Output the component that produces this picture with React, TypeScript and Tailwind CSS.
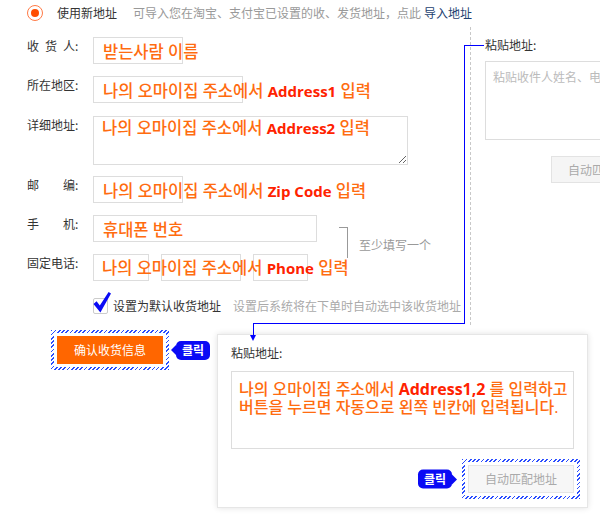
import type { ReactNode } from 'react'

// Korean annotation text: Latin parts in Open Sans, Hangul falls back to Noto KR
const KR = "font-['Open_Sans','Noto_Sans_CJK_KR',sans-serif]"
const BLUE = 'bg-[#0a0af5]'

function Hatch({ children, className = '' }: { children: ReactNode; className?: string }) {
  return (
    <div
      className={`relative p-[3px] bg-[repeating-linear-gradient(135deg,#2a4dff_0_1.2px,transparent_1.2px_3px)] ${className}`}
    >
      <div className="bg-white p-[3px]">{children}</div>
    </div>
  )
}

function Bubble({ side }: { side: 'left' | 'right' }) {
  return (
    <div className="flex items-center">
      {side === 'left' && (
        <span className="w-0 h-0 border-y-[5px] border-y-transparent border-r-[5px] border-r-[#0a0af5]" />
      )}
      <span
        className={`${BLUE} ${KR} rounded-[5px] w-[34px] h-[19px] leading-[19px] text-center text-white text-[12px] font-bold`}
      >
        클릭
      </span>
      {side === 'right' && (
        <span className="w-0 h-0 border-y-[5px] border-y-transparent border-l-[5px] border-l-[#0a0af5]" />
      )}
    </div>
  )
}

function Hint({ ko, en, tail = ' 입력', lead = 'leading-[27px]' }: { ko: string; en?: string; tail?: string; lead?: string }) {
  return (
    <span
      className={`absolute left-[9px] top-0 ${lead} whitespace-nowrap text-[16.5px] font-medium text-[#ff6c10] ${KR}`}
    >
      {ko}
      {en && <b className="font-bold text-[15px] text-[#ff2200]">{en}</b>}
      {en && tail}
    </span>
  )
}

function Row({ label, children, className = '' }: { label: ReactNode; children: ReactNode; className?: string }) {
  return (
    <div className={`flex items-start ${className}`}>
      <div className="w-[66px] shrink-0 leading-[18px]">{label}</div>
      {children}
    </div>
  )
}

const box = 'relative h-[27px] border border-[#ddd] shrink-0'

export default function App() {
  return (
    <div className="relative w-[600px] h-[517px] overflow-hidden bg-white text-[12px] text-[#333] font-['Noto_Sans_CJK_SC',sans-serif]">
      {/* top line */}
      <div className="flex items-center h-[25px] w-[472px] overflow-hidden whitespace-nowrap pl-[27px]">
        <span className="flex items-center justify-center w-4 h-4 rounded-full border border-[#ff7a45] shrink-0">
          <span className="w-2 h-2 rounded-full bg-[#ff4d00]" />
        </span>
        <span className="ml-[14px]">使用新地址</span>
        <span className="ml-[16px] text-[#999]">可导入您在淘宝、支付宝已设置的收、发货地址，点此</span>
        <span className="ml-[3px] text-[#1d4170]">导入地址</span>
      </div>

      <div className="flex mt-[2px]">
        {/* form */}
        <div className="w-[470px] shrink-0 pl-[27px] pt-[10px]">
          <Row
            label={
              <>
                <span className="tracking-[6px]">收货</span>人:
              </>
            }
          >
            <div className={`${box} w-[90px]`}>
              <Hint ko="받는사람 이름" />
            </div>
          </Row>
          <Row label="所在地区:" className="mt-[12px]">
            <div className={`${box} w-[150px]`}>
              <Hint ko="나의 오마이집 주소에서 " en="Address1" />
            </div>
          </Row>
          <Row label="详细地址:" className="mt-[13px]">
            <div className="relative shrink-0">
              <textarea readOnly className="block w-[315px] h-[49px] border border-[#ddd] outline-none" />
              <Hint ko="나의 오마이집 주소에서 " en="Address2" lead="leading-[24px]" />
            </div>
          </Row>
          <Row label="邮　　编:" className="mt-[11px]">
            <div className={`${box} w-[90px]`}>
              <Hint ko="나의 오마이집 주소에서 " en="Zip Code" />
            </div>
          </Row>

          <div className="flex items-start mt-[12px]">
            <div className="w-[289px] shrink-0">
              <Row label="手　　机:">
                <div className={`${box} w-[224px]`}>
                  <Hint ko="휴대폰 번호" />
                </div>
              </Row>
              <Row label="固定电话:" className="mt-[12px]">
                <div className="relative flex gap-[12px]">
                  <div className={`${box} w-[56px]`} />
                  <div className={`${box} w-[80px]`} />
                  <div className={`${box} w-[55px]`} />
                  <Hint ko="나의 오마이집 주소에서 " en="Phone" />
                </div>
              </Row>
            </div>
            <div className="flex items-start mt-[12px] ml-[23px]">
              <div className="w-[9px] h-[31px] border-t border-r border-[#999]" />
              <span className="ml-[11px] mt-[9px] leading-[18px] text-[#999] whitespace-nowrap">至少填写一个</span>
            </div>
          </div>

          <div className="flex items-center h-[18px] mt-[16px] pl-[66px] whitespace-nowrap">
            <span className="relative w-[15px] h-[16px] border border-[#ccc] rounded-[2px] shrink-0">
              <svg className="absolute -left-[1px] -top-[8px]" width="19" height="23" viewBox="0 0 19 23">
                <path d="M0.5 13 L3.6 10.2 L6.8 14.6 L15.6 1 L18 2.6 L7.4 21.5 Z" fill="#0a0af5" />
              </svg>
            </span>
            <span className="ml-[5px]">设置为默认收货地址</span>
            <span className="ml-[12px] text-[#aaa]">设置后系统将在下单时自动选中该收货地址</span>
          </div>

          <div className="flex items-center mt-[15px] ml-[24px]">
            <Hatch>
              <button className="block w-[106px] h-[28px] bg-[#ff6600] text-white text-[12px]">确认收货信息</button>
            </Hatch>
            <div className="ml-[2px]">
              <Bubble side="left" />
            </div>
          </div>
        </div>

        {/* paste panel */}
        <div className="self-start h-[298px] flex-1 border-l border-dashed border-[#c8c8c8] pl-[14px] pt-[9px]">
          <div className="leading-[18px] whitespace-nowrap">粘贴地址:</div>
          <div className="mt-[7px] w-[172px] h-[79px] border border-[#ddd] px-[7px] pt-[6px] leading-[18px] text-[#bbb] whitespace-nowrap overflow-hidden">
            粘贴收件人姓名、电话、地址
          </div>
          <button className="block mt-[16px] ml-[66px] w-[106px] h-[27px] bg-[#f5f5f5] border border-[#e3e3e3] text-[#aaa] text-[12px]">
            自动匹配地址
          </button>
        </div>
      </div>

      {/* enlarged paste panel callout */}
      <div className="absolute left-[217px] top-[334px] w-[371px] h-[174px] bg-white border border-[#e6e6e6] shadow-[0_0_6px_rgba(0,0,0,0.12)] px-[13px] pt-[9px]">
        <div className="leading-[18px]">粘贴地址:</div>
        <div
          className={`mt-[9px] w-[343px] h-[78px] border border-[#ddd] pl-[7px] pt-[8px] leading-[18px] text-[16px] font-medium text-[#ff6c10] whitespace-nowrap ${KR}`}
        >
          나의 오마이집 주소에서 <b className="font-bold text-[#ff2200]">Address1,2</b> 를 입력하고
          <br />
          버튼을 누르면 자동으로 왼쪽 빈칸에 입력됩니다.
        </div>
        <div className="flex justify-end mt-[16px]">
          <Hatch className="-m-[6px]">
            <button className="block w-[106px] h-[28px] bg-[#f7f7f7] border border-[#e5e5e5] text-[#aaa] text-[12px]">
              自动匹配地址
            </button>
            <div className="absolute right-full top-1/2 -translate-y-1/2 mr-[5px]">
              <Bubble side="right" />
            </div>
          </Hatch>
        </div>
      </div>

      {/* connector lines */}
      <div className="absolute left-[464px] top-[45px] w-[20px] h-px bg-[#0000ff]" />
      <div className="absolute left-[464px] top-[45px] w-px h-[279px] bg-[#0000ff]" />
      <div className="absolute left-[253px] top-[323px] w-[212px] h-px bg-[#0000ff]" />
      <div className="absolute left-[253px] top-[323px] w-px h-[13px] bg-[#0000ff]" />
      <div className="absolute left-[250px] top-[335px] w-0 h-0 border-x-[3.5px] border-x-transparent border-t-[6px] border-t-[#0000ff]" />
    </div>
  )
}
